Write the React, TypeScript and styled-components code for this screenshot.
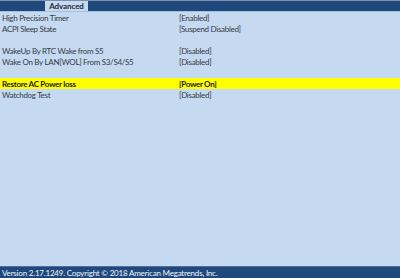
import React from 'react';
import styled, { createGlobalStyle } from 'styled-components';

const GlobalStyle = createGlobalStyle`
	html, body {
		margin: 0;
		padding: 0;
		background: #c5d9f1;
	}
	body {
		font-family: Lato, "Open Sans", "Liberation Sans", sans-serif;
	}
`;

interface Setting {
	label?: string;
	value?: string;
	active?: boolean;
}

const settings: Setting[] = [
	{ label: 'High Precision Timer', value: '[Enabled]' },
	{ label: 'ACPI Sleep State', value: '[Suspend Disabled]' },
	{},
	{ label: 'WakeUp By RTC Wake from S5', value: '[Disabled]' },
	{ label: 'Wake On By LAN[WOL] From S3/S4/S5', value: '[Disabled]' },
	{},
	{ label: 'Restore AC Power loss', value: '[Power On]', active: true },
	{ label: 'Watchdog Test', value: '[Disabled]' },
];

const Screen = styled.div`
	width: 400px;
	height: 278px;
	display: flex;
	flex-direction: column;
	background: #c5d9f1;
	overflow: hidden;
`;

const TabBar = styled.div`
	height: 12px;
	box-sizing: border-box;
	display: flex;
	background: #1f497d;
	border-top: 1px solid #7d8ea6;
	border-bottom: 1px solid #a9c0dd;
	padding-left: 45px;
`;

const Tab = styled.div`
	width: 43px;
	display: flex;
	align-items: center;
	justify-content: center;
	background: #c5d9f1;
	color: #1e2a3a;
	font-size: 8px;
	font-weight: 700;
	letter-spacing: -0.1px;
	line-height: 1;
`;

const Content = styled.div`
	flex: 1;
	display: flex;
	flex-direction: column;
`;

const Row = styled.div<{ $active?: boolean }>`
	height: 11px;
	display: grid;
	grid-template-columns: 177px 1fr;
	align-items: center;
	padding-left: 2px;
	padding-top: 1px;
	box-sizing: border-box;
	background: ${(props) => (props.$active ? '#ffff00' : 'transparent')};
	color: ${(props) => (props.$active ? '#262000' : '#343b45')};
	font-size: 8px;
	font-weight: ${(props) => (props.$active ? 700 : 400)};
	letter-spacing: -0.3px;
	line-height: 1;
	white-space: nowrap;
`;

const Footer = styled.div`
	height: 12px;
	box-sizing: border-box;
	display: flex;
	align-items: center;
	padding-left: 2px;
	background: #1f497d;
	border-top: 1px solid #4f6f98;
	color: #f2f6fb;
	font-size: 8px;
	letter-spacing: -0.2px;
	line-height: 1;
	white-space: nowrap;
`;

const App = () => {
	return (
		<>
			<GlobalStyle />
			<Screen>
				<TabBar>
					<Tab>Advanced</Tab>
				</TabBar>
				<Content>
					{settings.map((item, index) => (
						<Row key={index} $active={item.active}>
							<span>{item.label}</span>
							<span>{item.value}</span>
						</Row>
					))}
				</Content>
				<Footer>Version 2.17.1249. Copyright © 2018 American Megatrends, Inc.</Footer>
			</Screen>
		</>
	);
};

export default App;
